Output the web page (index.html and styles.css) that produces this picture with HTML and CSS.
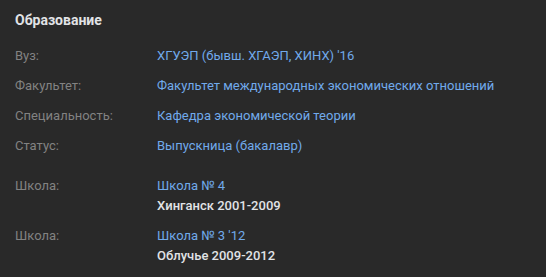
FILE: index.html
```html
<!DOCTYPE html>
<html lang="ru">
<head>
<meta charset="utf-8">
<link rel="stylesheet" href="styles.css">
</head>
<body>
<section class="edu">
  <h2 class="edu-title">Образование</h2>
  <div class="edu-group">
    <div class="row"><div class="label">Вуз:</div><div class="value"><a class="link">ХГУЭП (бывш. ХГАЭП, ХИНХ) '16</a></div></div>
    <div class="row"><div class="label">Факультет:</div><div class="value"><a class="link">Факультет международных экономических отношений</a></div></div>
    <div class="row"><div class="label">Специальность:</div><div class="value"><a class="link">Кафедра экономической теории</a></div></div>
    <div class="row"><div class="label">Статус:</div><div class="value"><a class="link">Выпускница (бакалавр)</a></div></div>
  </div>
  <div class="edu-group">
    <div class="row"><div class="label">Школа:</div><div class="value"><a class="link">Школа № 4</a><div class="sub">Хинганск 2001-2009</div></div></div>
    <div class="row"><div class="label">Школа:</div><div class="value"><a class="link">Школа № 3 '12</a><div class="sub">Облучье 2009-2012</div></div></div>
  </div>
</section>
</body>
</html>
```

FILE: styles.css
```css
html, body {
  margin: 0;
  padding: 0;
  background: #292929;
}
body {
  font-family: Roboto, "Noto Sans", sans-serif;
  font-size: 13px;
  line-height: 20px;
}
.edu {
  padding: 10px 15px 0 15px;
}
.edu-title {
  margin: 0 0 16px 0;
  font-size: 14px;
  line-height: 20px;
  font-weight: 700;
  color: #e1e3e6;
}
.edu-group {
  display: flex;
  flex-direction: column;
  gap: 10px;
}
.edu-group + .edu-group {
  margin-top: 20px;
}
.row {
  display: flex;
}
.label {
  width: 142px;
  flex: none;
  color: #828282;
}
.value {
  display: flex;
  flex-direction: column;
}
.link {
  color: #71aaeb;
  text-decoration: none;
}
.sub {
  color: #e1e3e6;
  font-weight: 500;
}
```
